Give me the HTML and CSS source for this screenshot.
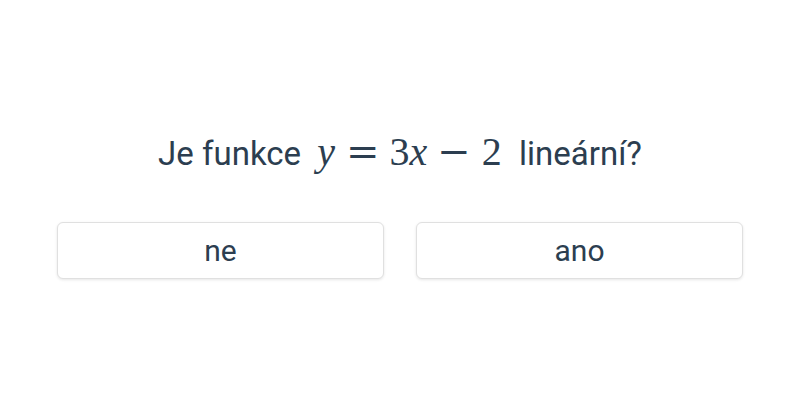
FILE: index.html
```html
<!DOCTYPE html>
<html lang="cs">
<head>
<meta charset="utf-8">
<link rel="stylesheet" href="styles.css">
</head>
<body>
<main class="quiz">
  <p class="question">Je funkce <span class="math"><i class="var">y</i><span class="rel">=</span><span class="num">3</span><i class="var">x</i><span class="bin">−</span><span class="num">2</span></span> lineární?</p>
  <div class="answers">
    <button class="answer">ne</button>
    <button class="answer">ano</button>
  </div>
</main>
</body>
</html>
```
FILE: styles.css
```css
html, body {
  margin: 0;
  padding: 0;
  background: #fff;
}
body {
  font-family: Roboto, "Noto Sans", sans-serif;
  color: #2c3e50;
}
.quiz {
  height: 400px;
  display: flex;
  flex-direction: column;
  justify-content: center;
  padding: 6px 57px 0;
  box-sizing: border-box;
}
.question {
  margin: 0 0 44px;
  text-align: center;
  font-size: 33px;
  line-height: 48px;
}
.math {
  font-family: "Liberation Serif", serif;
  font-size: 40px;
  margin: 0 9px 0 8px;
}
.var {
  font-style: italic;
}
.rel,
.bin {
  font-family: "DejaVu Serif", serif;
}
.rel {
  margin: 0 10px 0 11px;
}
.bin {
  margin: 0 11px 0 10px;
}
.answers {
  display: grid;
  grid-template-columns: 1fr 1fr;
  gap: 32px;
}
.answer {
  height: 57px;
  background: #fff;
  border: 1px solid #e0e0e0;
  border-radius: 6px;
  box-shadow: 0 1px 3px rgba(0, 0, 0, 0.1);
  font-family: Roboto, sans-serif;
  font-size: 30px;
  color: #2c3e50;
}
```
